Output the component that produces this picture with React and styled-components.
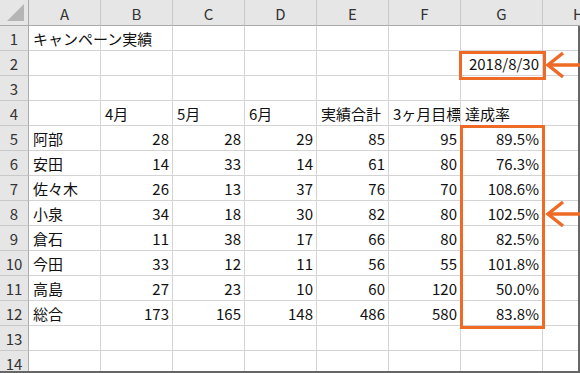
import React from "react";
import styled, { createGlobalStyle } from "styled-components";

const Global = createGlobalStyle`
  html, body { margin: 0; padding: 0; background: #fff; }
  body { font-family: "Noto Sans CJK JP", "Noto Sans", sans-serif; }
`;

const ORANGE = "#ef6a25";
const COLS = [29, 72, 72, 72, 72, 72, 72, 82, 72];
const template = COLS.map((c) => `${c}px`).join(" ");

const Frame = styled.div`
  position: relative;
  width: 580px;
  height: 373px;
  overflow: hidden;
  background: #fff;
`;

const HeaderRow = styled.div`
  display: grid;
  grid-template-columns: ${template};
  height: 26px;
  background: #e6e6e6;
`;

const ColHead = styled.div`
  box-sizing: border-box;
  display: flex;
  align-items: center;
  justify-content: center;
  border-right: 1px solid #c8c8c8;
  border-bottom: 1px solid #ababab;
  font-size: 15px;
  color: #333;
  padding-top: 1px;
`;

const Corner = styled.div`
  box-sizing: border-box;
  border-right: 1px solid #ababab;
  border-bottom: 1px solid #ababab;
  display: flex;
  align-items: flex-end;
  justify-content: flex-end;
  padding: 0 4px 4px 0;
`;

const Body = styled.div`
  box-sizing: border-box;
  width: 580px;
  height: 347px;
  overflow: hidden;
  border-right: 2px solid #666;
  border-bottom: 2px solid #666;
`;

const Grid = styled.div`
  display: grid;
  grid-template-columns: ${template};
  grid-auto-rows: 25px;
`;

const RowHead = styled.div`
  box-sizing: border-box;
  background: #e6e6e6;
  border-right: 1px solid #ababab;
  border-bottom: 1px solid #c8c8c8;
  display: flex;
  align-items: center;
  justify-content: center;
  font-size: 15px;
  color: #333;
  padding-top: 1px;
`;

const Cell = styled.div`
  box-sizing: border-box;
  border-right: 1px solid #d4d4d4;
  border-bottom: 1px solid #d4d4d4;
  display: flex;
  align-items: center;
  justify-content: ${(p) => (p.$num ? "flex-end" : "flex-start")};
  padding: 1px 3px 0 4px;
  font-size: 15px;
  color: #111;
  white-space: nowrap;
  overflow: ${(p) => (p.$spill ? "visible" : "hidden")};
  position: relative;
  z-index: ${(p) => (p.$spill ? 1 : 0)};
`;

const Highlight = styled.div`
  position: absolute;
  box-sizing: border-box;
  border: 3px solid ${ORANGE};
  pointer-events: none;
`;

const DateBox = styled(Highlight)`
  left: 459px;
  top: 51px;
  width: 87px;
  height: 29px;
`;

const RateBox = styled(Highlight)`
  left: 460px;
  top: 125px;
  width: 85px;
  height: 204px;
`;

const ArrowSvg = styled.svg`
  position: absolute;
  left: 544px;
  top: ${(p) => p.$top}px;
  width: 36px;
  height: 30px;
  overflow: visible;
`;

const Arrow = ({ top }) => (
  <ArrowSvg $top={top} viewBox="0 0 36 30">
    <path d="M19 3 L4 15 L19 27" fill="none" stroke={ORANGE} strokeWidth="3.5" />
    <path d="M5 15 L36 15" fill="none" stroke={ORANGE} strokeWidth="3.5" />
  </ArrowSvg>
);

const letters = ["A", "B", "C", "D", "E", "F", "G", "H"];

const data = [
  [{ t: "キャンペーン実績", spill: true }, "", "", "", "", "", "", ""],
  ["", "", "", "", "", "", { t: "2018/8/30", num: true }, ""],
  ["", "", "", "", "", "", "", ""],
  ["", "4月", "5月", "6月", "実績合計", "3ヶ月目標", "達成率", ""],
];

const rows = [
  ["阿部", 28, 28, 29, 85, 95, "89.5%"],
  ["安田", 14, 33, 14, 61, 80, "76.3%"],
  ["佐々木", 26, 13, 37, 76, 70, "108.6%"],
  ["小泉", 34, 18, 30, 82, 80, "102.5%"],
  ["倉石", 11, 38, 17, 66, 80, "82.5%"],
  ["今田", 33, 12, 11, 56, 55, "101.8%"],
  ["高島", 27, 23, 10, 60, 120, "50.0%"],
  ["総合", 173, 165, 148, 486, 580, "83.8%"],
];

rows.forEach((r) => {
  data.push([r[0], ...r.slice(1).map((v) => ({ t: String(v), num: true })), ""]);
});
data.push(["", "", "", "", "", "", "", ""]);
data.push(["", "", "", "", "", "", "", ""]);

export default function App() {
  return (
    <Frame>
      <Global />
      <HeaderRow>
        <Corner>
          <svg width="17" height="17" viewBox="0 0 17 17">
            <polygon points="17,0 17,17 0,17" fill="#b5b5b5" />
          </svg>
        </Corner>
        {letters.map((l) => (
          <ColHead key={l}>{l}</ColHead>
        ))}
      </HeaderRow>
      <Body>
        <Grid>
          {data.map((row, ri) => (
            <React.Fragment key={ri}>
              <RowHead>{ri + 1}</RowHead>
              {row.map((c, ci) => {
                const obj = typeof c === "string" ? { t: c } : c;
                return (
                  <Cell key={ci} $num={obj.num} $spill={obj.spill}>
                    {obj.t}
                  </Cell>
                );
              })}
            </React.Fragment>
          ))}
        </Grid>
      </Body>
      <DateBox />
      <RateBox />
      <Arrow top={50} />
      <Arrow top={199} />
    </Frame>
  );
}
